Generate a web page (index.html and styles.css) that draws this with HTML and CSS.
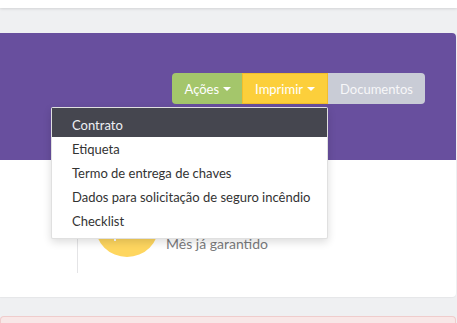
FILE: index.html
```html
<!DOCTYPE html>
<html lang="pt-BR">
<head>
  <meta charset="UTF-8" />
  <meta name="viewport" content="width=device-width, initial-scale=1.0"/>
  <title>Contrato</title>
  <link rel="stylesheet" href="styles.css">
</head>
<body>
  <div class="topbar"></div>

  <div class="content">
    <div class="card">
      <div class="card-header">
        <div class="btn-group">
          <button class="btn btn-green">Ações <span class="caret"></span></button>
          <div class="dropdown">
            <button class="btn btn-yellow active">Imprimir <span class="caret"></span></button>
            <ul class="dropdown-menu">
              <li class="selected">Contrato</li>
              <li>Etiqueta</li>
              <li>Termo de entrega de chaves</li>
              <li>Dados para solicitação de seguro incêndio</li>
              <li>Checklist</li>
            </ul>
          </div>
          <button class="btn btn-gray">Documentos</button>
        </div>
      </div>

      <div class="card-body">
        <div class="stat">
          <div class="stat-icon"><span class="stat-mark"></span></div>
          <div class="stat-text">
            <div class="stat-title">1</div>
            <div class="stat-sub">Mês já garantido</div>
          </div>
        </div>
      </div>
    </div>

    <div class="alert"></div>
  </div>
</body>
</html>
```

FILE: styles.css
```css
/* Base */
* {
  margin: 0;
  padding: 0;
  box-sizing: border-box;
}

body {
  font-family: 'Lato', 'Open Sans', sans-serif;
  background: #eff0f2;
  color: #333;
  height: 323px;
  overflow: hidden;
}

.topbar {
  height: 8px;
  background: #fff;
  box-shadow: 0 1px 3px rgba(0, 0, 0, 0.12);
}

.content {
  padding: 25px 1px 0 0;
}

/* Card */
.card {
  background: #fff;
  border-radius: 0 4px 4px 0;
  box-shadow: 0 1px 1px rgba(0, 0, 0, 0.04);
}

.card-header {
  height: 127px;
  background: #684f9e;
  border-radius: 0 4px 0 0;
  padding: 40px 31px 0 0;
  display: flex;
  justify-content: flex-end;
  align-items: flex-start;
}

.btn-group {
  display: flex;
}

.btn {
  height: 31px;
  font-family: inherit;
  font-size: 13px;
  border: none;
  color: #fff;
  padding: 0 13px;
  cursor: pointer;
  display: flex;
  align-items: center;
  gap: 4px;
}

.btn-green {
  background: #a4c66b;
  border-radius: 4px 0 0 4px;
  padding-right: 11px;
}

.btn-yellow {
  background: #fccf3b;
}

.btn-yellow.active {
  box-shadow: inset 0 0 0 1px #f3bf2b;
}

.btn-gray {
  background: #c9ccd6;
  color: #f7f7f9;
  border-radius: 0 4px 4px 0;
  padding: 0 12px;
}

.caret {
  width: 0;
  height: 0;
  border-top: 4px solid #fff;
  border-left: 4px solid transparent;
  border-right: 4px solid transparent;
  margin-top: 1px;
}

/* Dropdown */
.dropdown {
  position: relative;
}

.dropdown-menu {
  position: absolute;
  top: 34px;
  right: 0;
  width: 277px;
  list-style: none;
  background: #fff;
  border: 1px solid rgba(0, 0, 0, 0.12);
  border-radius: 2px;
  box-shadow: 0 3px 8px rgba(0, 0, 0, 0.14);
  padding: 0 0 5px;
  z-index: 10;
}

.dropdown-menu li {
  font-size: 13px;
  line-height: 18px;
  padding: 3px 20px;
  color: #333;
  white-space: nowrap;
}

.dropdown-menu li:first-child {
  padding-top: 8px;
}

.dropdown-menu li.selected {
  background: #45464f;
  color: #eef0f4;
}

/* Card body */
.card-body {
  height: 137px;
  padding: 20px 0 0 77px;
}

.stat {
  display: flex;
  align-items: center;
  border-left: 1px solid #e4e4e6;
  padding: 13px 0 16px 17px;
  width: 250px;
}

.stat-icon {
  width: 64px;
  height: 64px;
  border-radius: 50%;
  background: #fed65f;
  position: relative;
  flex-shrink: 0;
}

.stat-mark {
  position: absolute;
  left: 19px;
  top: 45px;
  width: 2px;
  height: 3px;
  background: #fff;
}

.stat-text {
  margin-left: 7px;
  padding-top: 14px;
}

.stat-title {
  font-size: 20px;
  color: #444;
  line-height: 24px;
}

.stat-sub {
  font-size: 14px;
  color: #7a7a7c;
  line-height: 18px;
}

/* Alert */
.alert {
  margin-top: 19px;
  height: 8px;
  background: #f8e7e7;
  border: 1px solid #f0cccc;
  border-bottom: none;
  border-radius: 4px 4px 0 0;
}
```
